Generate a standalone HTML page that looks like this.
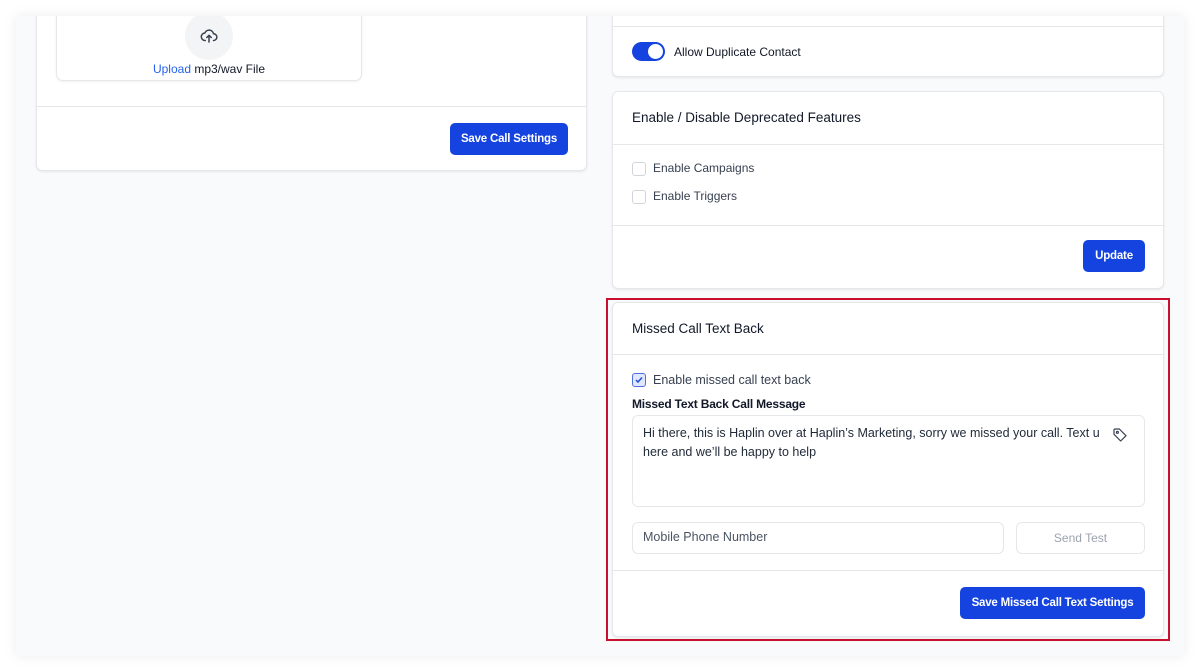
<!DOCTYPE html>
<html><head><meta charset="utf-8"><style>
*{box-sizing:border-box;margin:0;padding:0}
body{width:1200px;height:672px;background:#fff;font-family:"Liberation Sans",Arial,sans-serif;position:relative;overflow:hidden;color:#111827}
.frame{position:absolute;left:16px;top:16px;width:1168px;height:640px;background:#f9fafb;box-shadow:0 0 12px rgba(0,0,0,.08);overflow:hidden}
.card{position:absolute;background:#fff;border:1px solid #e5e7eb;border-radius:6px;box-shadow:0 1px 2px rgba(0,0,0,.08)}
.hr{position:absolute;left:0;right:0;height:1px;background:#e5e7eb}
.btn{position:absolute;background:#1443e0;color:#fff;border-radius:5px;font-size:11.5px;font-weight:bold;display:flex;align-items:center;justify-content:center;letter-spacing:-.2px}
.t{position:absolute;white-space:nowrap}
.cb{position:absolute;width:14px;height:14px;border:1px solid #d1d5db;border-radius:3px;background:#fff}
</style></head><body>
<div class="frame">
 <div class="card" style="left:20px;top:-20px;width:551px;height:175px">
  <div style="position:absolute;left:19px;top:0;width:306px;height:84px;border:1px solid #e5e7eb;border-radius:7px;box-shadow:0 1px 2px rgba(0,0,0,.06)">
   <div style="position:absolute;left:128px;top:14px;width:48px;height:48px;border-radius:50%;background:#f3f4f6"></div>
   <svg style="position:absolute;left:143px;top:29px" width="18" height="18" viewBox="0 0 24 24" fill="none" stroke="#374151" stroke-width="2" stroke-linecap="round" stroke-linejoin="round"><path d="M7 18a5 5 0 0 1-.5-10A6 6 0 0 1 18 9a4 4 0 0 1 0 9"/><path d="M12 20v-9M9 14l3-3 3 3"/></svg>
   <div class="t" style="left:0;right:0;top:64px;text-align:center;font-size:12px"><span style="color:#2563eb">Upload</span> mp3/wav File</div>
  </div>
  <div class="hr" style="top:109px"></div>
  <div class="btn" style="left:413px;top:126px;width:118px;height:32px">Save Call Settings</div>
 </div>

 <div class="card" style="left:596px;top:-20px;width:552px;height:81px">
  <div class="hr" style="top:29px"></div>
  <div style="position:absolute;left:19px;top:45px;width:33px;height:19px;border-radius:10px;background:#1443e0"><div style="position:absolute;right:2px;top:2px;width:15px;height:15px;border-radius:50%;background:#fff"></div></div>
  <div class="t" style="left:61px;top:48px;font-size:12px">Allow Duplicate Contact</div>
 </div>

 <div class="card" style="left:596px;top:75px;width:552px;height:198px">
  <div class="t" style="left:19px;top:18px;font-size:13.5px">Enable / Disable Deprecated Features</div>
  <div class="hr" style="top:52px"></div>
  <div class="cb" style="left:19px;top:70px"></div><div class="t" style="left:40px;top:69px;font-size:12px;color:#374151">Enable Campaigns</div>
  <div class="cb" style="left:19px;top:98px"></div><div class="t" style="left:40px;top:97px;font-size:12px;color:#374151">Enable Triggers</div>
  <div class="hr" style="top:133px"></div>
  <div class="btn" style="left:470px;top:148px;width:62px;height:32px">Update</div>
 </div>

 <div style="position:absolute;left:590px;top:282px;width:564px;height:343px;border:2px solid #c8102e"></div>
 <div class="card" style="left:596px;top:286px;width:552px;height:335px">
  <div class="t" style="left:19px;top:18px;font-size:13.5px">Missed Call Text Back</div>
  <div class="hr" style="top:51px"></div>
  <div class="cb" style="left:19px;top:70px;background:#e0e7ff;border-color:#4f6ee0"></div>
  <svg style="position:absolute;left:21px;top:72px" width="10" height="10" viewBox="0 0 10 10"><path d="M2 5l2 2 4-4.5" fill="none" stroke="#1d4ed8" stroke-width="1.5"/></svg>
  <div class="t" style="left:40px;top:70px;font-size:12.5px;color:#374151">Enable missed call text back</div>
  <div class="t" style="left:19px;top:94px;font-size:12px;font-weight:bold;color:#111827;letter-spacing:-.2px">Missed Text Back Call Message</div>
  <div style="position:absolute;left:19px;top:112px;width:513px;height:92px;border:1px solid #e5e7eb;border-radius:6px;overflow:hidden">
   <div style="position:absolute;left:10px;top:8px;width:460px;font-size:12.5px;line-height:19px;color:#1f2937;white-space:nowrap">Hi there, this is Haplin over at Haplin’s Marketing, sorry we missed your call. Text u<br>here and we’ll be happy to help</div>
   <div style="position:absolute;left:470px;top:0;width:40px;height:40px;background:#fff"></div>
   <svg style="position:absolute;left:479px;top:11px" width="16" height="16" viewBox="0 0 24 24" fill="none" stroke="#374151" stroke-width="1.8" stroke-linejoin="round"><path d="M3 4v7l10 10 8-8L11 3H4z"/><circle cx="8" cy="8" r="1.5"/></svg>
  </div>
  <div style="position:absolute;left:19px;top:219px;width:372px;height:32px;border:1px solid #e5e7eb;border-radius:6px"></div>
  <div class="t" style="left:30px;top:227px;font-size:12.5px;color:#4b5563">Mobile Phone Number</div>
  <div style="position:absolute;left:403px;top:219px;width:129px;height:32px;border:1px solid #e5e7eb;border-radius:6px;font-size:12px;color:#9ca3af;display:flex;align-items:center;justify-content:center">Send Test</div>
  <div class="hr" style="top:267px"></div>
  <div class="btn" style="left:347px;top:284px;width:185px;height:32px">Save Missed Call Text Settings</div>
 </div>
</div>
</body></html>
